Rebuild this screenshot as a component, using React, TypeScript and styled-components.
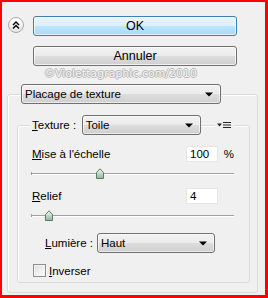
import styled, { createGlobalStyle } from "styled-components";

const GlobalStyle = createGlobalStyle`
  html, body {
    margin: 0;
    padding: 0;
    background: #ffffff;
  }
  body {
    font-family: "Liberation Sans", Arial, sans-serif;
    font-size: 11.5px;
    line-height: 14px;
    color: #000;
  }
`;

function Arrow() {
  return (
    <svg width="8" height="5" viewBox="0 0 8 5">
      <path d="M0 0.5 H8 L4 4.5 Z" fill="#000" />
    </svg>
  );
}

function SelectBox({ value, width }: { value: string; width: number }) {
  return (
    <Select $width={width}>
      <span>{value}</span>
      <Arrow />
    </Select>
  );
}

function Slider({ pos }: { pos: number }) {
  return (
    <SliderWrap>
      <Track />
      <Thumb style={{ left: pos }} width="8" height="11" viewBox="0 0 8 11">
        <defs>
          <linearGradient id={`tg${pos}`} x1="0" y1="0" x2="0" y2="1">
            <stop offset="0" stopColor="#f4faf5" />
            <stop offset="1" stopColor="#8fb39a" />
          </linearGradient>
        </defs>
        <path d="M0.5 4.5 L4 0.8 L7.5 4.5 V10.5 H0.5 Z" fill={`url(#tg${pos})`} stroke="#5c7d68" />
      </Thumb>
    </SliderWrap>
  );
}

export default function App() {
  return (
    <Frame>
      <GlobalStyle />
      <TopRow>
        <Collapse>
          <svg width="10" height="10" viewBox="0 0 10 10">
            <path d="M2 5 L5 2 L8 5 M2 8.5 L5 5.5 L8 8.5" fill="none" stroke="#000" strokeWidth="1.4" />
          </svg>
        </Collapse>
        <Buttons>
          <Button $primary>OK</Button>
          <Button>Annuler</Button>
        </Buttons>
      </TopRow>
      <Watermark>©Violettagraphic.com/2010</Watermark>

      <OuterGroup>
        <OuterHeader>
          <SelectBox value="Placage de texture" width={200} />
        </OuterHeader>

        <InnerGroup>
          <InnerHeader>
            <Legend>
              <u>T</u>exture :
            </Legend>
            <SelectBox value="Toile" width={120} />
            <MenuIcon>
              <svg width="15" height="8" viewBox="0 0 15 8">
                <path d="M0 2.5 H5 L2.5 5.5 Z" fill="#222" />
                <path d="M6 1.5 H14 M6 4 H14 M6 6.5 H14" stroke="#222" strokeWidth="1.2" />
              </svg>
            </MenuIcon>
          </InnerHeader>

          <ValueRow>
            <Label>
              <u>M</u>ise à l'échelle
            </Label>
            <NumberBox>100</NumberBox>
            <Unit>%</Unit>
          </ValueRow>
          <Slider pos={65} />

          <ValueRow $gap={9}>
            <Label>
              <u>R</u>elief
            </Label>
            <NumberBox>4</NumberBox>
            <Unit />
          </ValueRow>
          <Slider pos={14} />

          <LightRow>
            <Label>
              <u>L</u>umière :
            </Label>
            <SelectBox value="Haut" width={118} />
          </LightRow>

          <CheckRow>
            <CheckBox />
            <Label>
              <u>I</u>nverser
            </Label>
          </CheckRow>
        </InnerGroup>
      </OuterGroup>
    </Frame>
  );
}

const Frame = styled.div`
  width: 268px;
  height: 298px;
  box-sizing: border-box;
  border: solid #ff0000;
  border-width: 2px 3px 3px 2px;
  background: #f0f0f0;
  overflow: hidden;
`;

const TopRow = styled.div`
  display: flex;
  align-items: flex-start;
  padding: 14px 0 0 6px;
  gap: 9px;
`;

const Collapse = styled.div`
  width: 16px;
  height: 16px;
  margin-top: 1px;
  box-sizing: border-box;
  border-radius: 50%;
  border: 1px solid #a8a8a8;
  background: linear-gradient(#ffffff, #e4e4e4);
  display: flex;
  align-items: center;
  justify-content: center;
`;

const Buttons = styled.div`
  display: flex;
  flex-direction: column;
  gap: 10px;
`;

const Button = styled.div<{ $primary?: boolean }>`
  width: 204px;
  height: 20px;
  box-sizing: border-box;
  border-radius: 3px;
  border: 1px solid ${(p) => (p.$primary ? "#3c7fb1" : "#707070")};
  background: ${(p) =>
    p.$primary
      ? "linear-gradient(#eaf6fd 0%, #d9f0fc 50%, #bee6fd 51%, #a7d9f5 100%)"
      : "linear-gradient(#f2f2f2 0%, #ebebeb 50%, #dddddd 51%, #cfcfcf 100%)"};
  box-shadow: inset 0 0 0 1px rgba(255, 255, 255, 0.7);
  display: flex;
  align-items: center;
  justify-content: center;
  font-size: 12.5px;
`;

const Watermark = styled.div`
  height: 16px;
  line-height: 16px;
  padding-left: 42px;
  font-family: "DejaVu Sans", sans-serif;
  font-size: 10.8px;
  letter-spacing: 0.1px;
  color: #f4f4f4;
  text-shadow: 1px 0 0 #b8b8b8, -1px 0 0 #b8b8b8, 0 1px 0 #b8b8b8, 0 -1px 0 #b8b8b8;
  white-space: nowrap;
`;

const OuterGroup = styled.div`
  margin: 12px 7px 0 5px;
  height: 197px;
  border: 1px solid #d8dcdf;
  border-radius: 3px;
  box-shadow: inset 1px 1px 0 #ffffff;
`;

const OuterHeader = styled.div`
  margin: -11px 0 0 13px;
  display: flex;
`;

const Select = styled.div<{ $width: number }>`
  width: ${(p) => p.$width}px;
  height: 20px;
  box-sizing: border-box;
  border: 1px solid #707070;
  border-radius: 3px;
  background: linear-gradient(#f2f2f2 0%, #ebebeb 50%, #dddddd 51%, #cfcfcf 100%);
  box-shadow: inset 0 0 0 1px rgba(255, 255, 255, 0.6);
  display: flex;
  align-items: center;
  justify-content: space-between;
  padding: 0 7px 0 3px;
  white-space: nowrap;
`;

const InnerGroup = styled.div`
  margin: 21px 7px 0 9px;
  height: 158px;
  box-sizing: border-box;
  padding: 0 15px 0 14px;
  border: 1px solid #d8dcdf;
  border-radius: 3px;
  box-shadow: inset 1px 1px 0 #ffffff;
`;

const InnerHeader = styled.div`
  margin: -11px 0 0 -2px;
  height: 20px;
  display: flex;
  align-items: center;
`;

const Legend = styled.div`
  width: 52px;
  height: 14px;
  box-sizing: border-box;
  padding-left: 2px;
  background: #f0f0f0;
  white-space: nowrap;
`;

const MenuIcon = styled.div`
  margin-left: 14px;
  padding: 0 2px;
  height: 10px;
  background: #f0f0f0;
  display: flex;
  align-items: center;
`;

const ValueRow = styled.div<{ $gap?: number }>`
  margin-top: ${(p) => p.$gap ?? 11}px;
  display: grid;
  grid-template-columns: 1fr 32px 16px;
  align-items: center;
  height: 16px;
`;

const Label = styled.span`
  white-space: nowrap;
`;

const NumberBox = styled.div`
  height: 16px;
  box-sizing: border-box;
  background: #ffffff;
  border: 1px solid #e6e6e6;
  padding-left: 3px;
  line-height: 14px;
`;

const Unit = styled.span`
  text-align: right;
`;

const SliderWrap = styled.div`
  position: relative;
  margin: 6px 0 0 -1px;
  height: 11px;
`;

const Track = styled.div`
  position: absolute;
  left: 0;
  right: 0;
  top: 5px;
  height: 1px;
  background: #a0a0a0;
  box-shadow: 0 1px 0 #ffffff;
  &::before {
    content: "";
    position: absolute;
    left: 0;
    top: -1px;
    width: 1px;
    height: 3px;
    background: #a0a0a0;
  }
`;

const Thumb = styled.svg`
  position: absolute;
  top: 0;
`;

const LightRow = styled.div`
  margin: 12px 0 0 13px;
  height: 20px;
  display: flex;
  align-items: center;
  gap: 4px;
`;

const CheckRow = styled.div`
  margin-top: 11px;
  display: flex;
  align-items: center;
  gap: 3px;
  padding-left: 1px;
  height: 13px;
`;

const CheckBox = styled.div`
  width: 13px;
  height: 13px;
  box-sizing: border-box;
  border: 1px solid #8f8f8f;
  background: linear-gradient(135deg, #dcdcdc, #ffffff);
  box-shadow: inset 0 0 0 1px #f4f4f4;
`;
